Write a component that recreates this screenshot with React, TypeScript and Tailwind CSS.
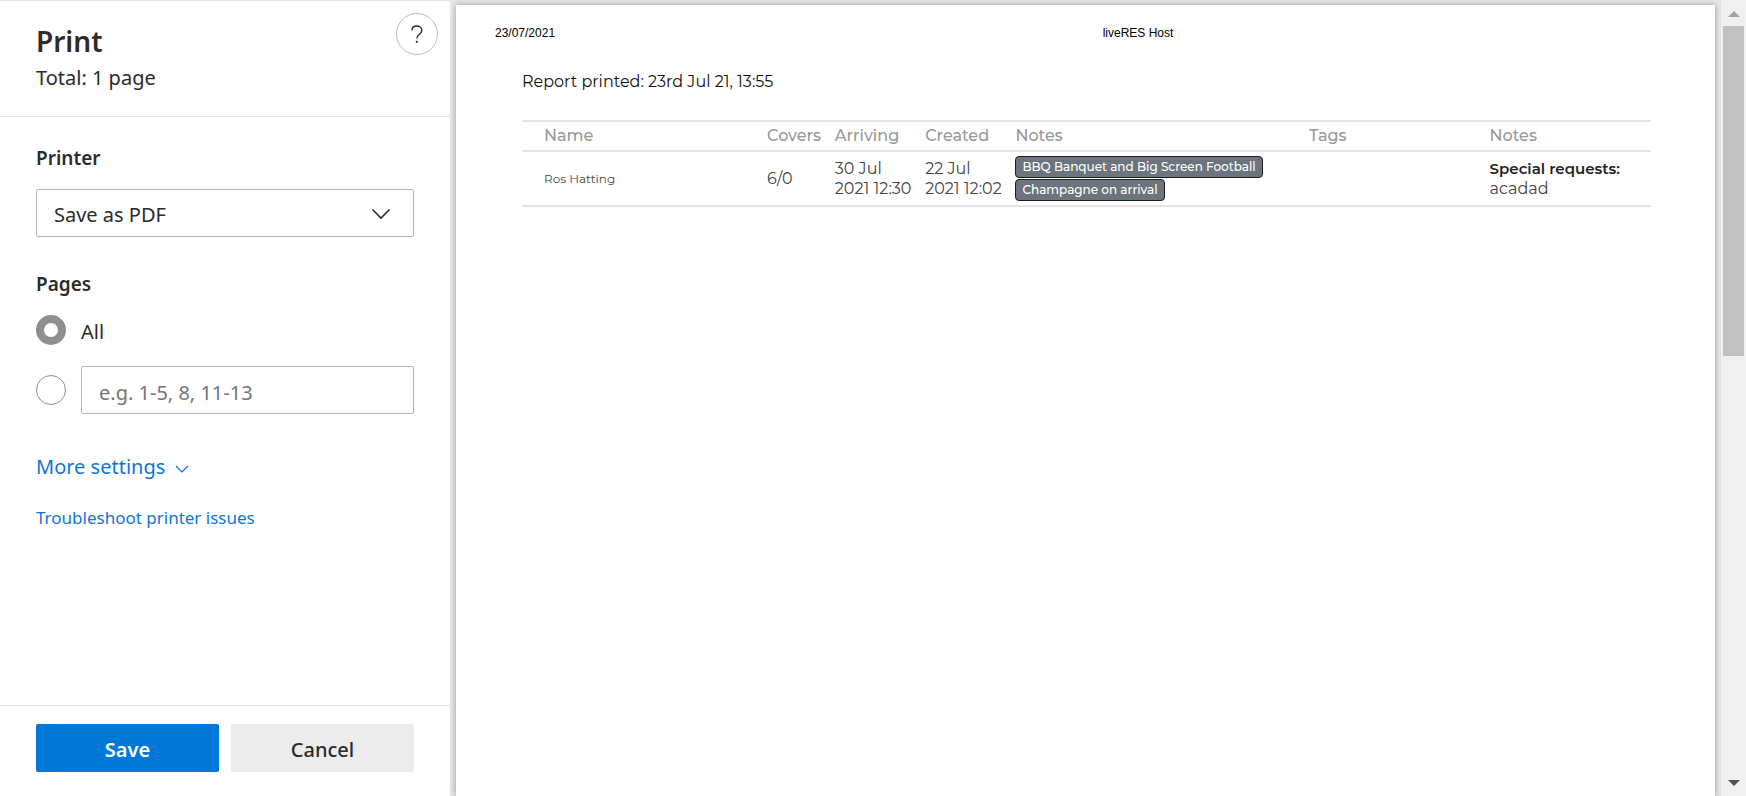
import { useState } from "react";

interface Booking {
  name: string;
  covers: string;
  arriving: string;
  created: string;
  notes: string[];
  tags: string;
  requests: string;
}

const bookings: Booking[] = [
  {
    name: "Ros Hatting",
    covers: "6/0",
    arriving: "30 Jul 2021 12:30",
    created: "22 Jul 2021 12:02",
    notes: ["BBQ Banquet and Big Screen Football", "Champagne on arrival"],
    tags: "",
    requests: "acadad",
  },
];

const columns = [
  { label: "Name", className: "w-[21%] pl-[22px]" },
  { label: "Covers", className: "w-[6%] pl-2" },
  { label: "Arriving", className: "w-[8%] pl-2" },
  { label: "Created", className: "w-[8%] pl-2" },
  { label: "Notes", className: "w-[26%] pl-2" },
  { label: "Tags", className: "w-[16%] pl-2" },
  { label: "Notes", className: "w-[15%] pl-2" },
];

const radioClass =
  "size-[30px] shrink-0 appearance-none rounded-full border border-[#8f8f8f] bg-white checked:border-8";

function PrintSettings() {
  const [range, setRange] = useState("all");
  const [pages, setPages] = useState("");

  return (
    <aside className="flex w-[450px] shrink-0 flex-col border-t border-[#e5e5e5] bg-white font-['Noto_Sans',sans-serif] text-xl text-[#2b2b2b]">
      <header className="flex justify-between border-b border-[#e5e5e5] pr-3 pb-6 pl-9">
        <div className="pt-5">
          <h1 className="text-[28px] leading-10 font-semibold">Print</h1>
          <p className="mt-[3px] leading-7">Total: 1 page</p>
        </div>
        <button
          type="button"
          aria-label="Help"
          className="mt-3 flex size-[42px] items-center justify-center rounded-full border border-[#bdbdbd]"
        >
          <svg width="12" height="18" viewBox="0 0 12 18" fill="none">
            <path
              d="M1 5.500C1 2.700 3 1 5.800 1s5 1.800 5 4.300c0 2.200-1.300 3.300-2.700 4.400C6.700 10.800 5.800 11.600 5.800 13.500"
              stroke="#2b2b2b"
              strokeWidth="1.400"
            />
            <circle cx="5.800" cy="16.800" r="1.100" fill="#2b2b2b" />
          </svg>
        </button>
      </header>

      <form
        id="print-form"
        className="flex-1 px-9 pt-[27px]"
        onSubmit={(e) => e.preventDefault()}
      >
        <label htmlFor="printer" className="block text-[19px] leading-7 font-semibold">
          Printer
        </label>
        <div className="relative mt-[17px]">
          <select
            id="printer"
            className="h-12 w-full appearance-none rounded-xs border border-[#b5b5b5] bg-white px-[17px] pt-1"
          >
            <option>Save as PDF</option>
          </select>
          <svg
            width="20"
            height="12"
            viewBox="0 0 20 12"
            fill="none"
            className="pointer-events-none absolute top-[19px] right-[23px]"
          >
            <path d="M1.500 1.500l8.500 8.500 8.500-8.500" stroke="#2b2b2b" strokeWidth="1.600" />
          </svg>
        </div>

        <fieldset className="mt-[33px]">
          <legend className="text-[19px] leading-7 font-semibold">Pages</legend>
          <div className="mt-[17px] flex h-[30px] items-center gap-[15px]">
            <input
              type="radio"
              id="range-all"
              name="range"
              checked={range === "all"}
              onChange={() => setRange("all")}
              className={radioClass}
            />
            <label htmlFor="range-all" className="pt-1">
              All
            </label>
          </div>
          <div className="mt-[21px] flex items-center gap-[15px]">
            <input
              type="radio"
              name="range"
              aria-label="Custom page range"
              checked={range === "custom"}
              onChange={() => setRange("custom")}
              className={radioClass}
            />
            <input
              type="text"
              aria-label="Page range"
              placeholder="e.g. 1-5, 8, 11-13"
              value={pages}
              onChange={(e) => setPages(e.target.value)}
              className="h-12 w-full min-w-0 rounded-xs border border-[#b5b5b5] px-[17px] pt-1 placeholder:text-[#757575]"
            />
          </div>
        </fieldset>

        <button
          type="button"
          className="mt-[39px] flex items-center gap-[10px] leading-7 text-[#0f75d4]"
        >
          More settings
          <svg width="14" height="8" viewBox="0 0 14 8" fill="none" className="mt-1">
            <path d="M1 1l6 6 6-6" stroke="currentColor" strokeWidth="1.200" />
          </svg>
        </button>
        <a href="#troubleshoot" className="mt-[25px] block text-[17px] leading-6 text-[#0f75d4]">
          Troubleshoot printer issues
        </a>
      </form>

      <footer className="flex gap-3 border-t border-[#e5e5e5] px-9 pt-[18px] pb-6">
        <button
          type="submit"
          form="print-form"
          className="h-12 flex-1 rounded-xs bg-[#0078d7] pt-[3px] font-semibold text-white"
        >
          Save
        </button>
        <button
          type="button"
          className="h-12 flex-1 rounded-xs bg-[#ececec] pt-[3px] font-medium"
        >
          Cancel
        </button>
      </footer>
    </aside>
  );
}

function BookingTable() {
  return (
    <table className="mt-7 w-full table-fixed border-collapse text-left text-[#444]">
      <thead>
        <tr className="border-y-2 border-[#e4e4e4]">
          {columns.map((col, i) => (
            <th
              key={i}
              scope="col"
              className={`h-[30px] font-medium text-[#999] ${col.className}`}
            >
              {col.label}
            </th>
          ))}
        </tr>
      </thead>
      <tbody>
        {bookings.map((b) => (
          <tr key={b.name} className="h-[55px] border-b-2 border-[#e4e4e4]">
            <td className="pl-[22px] text-xs">{b.name}</td>
            <td className="pl-2">{b.covers}</td>
            <td className="pl-2">{b.arriving}</td>
            <td className="pl-2">{b.created}</td>
            <td className="pl-2">
              <div className="flex flex-col items-start gap-px">
                {b.notes.map((note) => (
                  <span
                    key={note}
                    className="rounded-sm border border-[#1c1f22] bg-[#6c757d] px-[6px] text-xs leading-5 font-medium whitespace-nowrap text-white"
                  >
                    {note}
                  </span>
                ))}
              </div>
            </td>
            <td className="pl-2">{b.tags}</td>
            <td className="pl-2">
              <strong className="block text-[15px] leading-5 font-semibold whitespace-nowrap text-[#222]">
                Special requests:
              </strong>
              {b.requests}
            </td>
          </tr>
        ))}
      </tbody>
    </table>
  );
}

function Preview() {
  return (
    <main className="min-w-0 flex-1 overflow-hidden bg-[#e6e6e6] px-[6px] pt-[5px]">
      <article className="h-full bg-white shadow-[0_0_6px_#999]">
        <div className="flex pt-5 pl-[39px] font-['Liberation_Sans',Arial,sans-serif] text-xs text-black">
          <span className="w-[66px]">23/07/2021</span>
          <span className="flex-1 text-center">liveRES Host</span>
        </div>
        <div className="pt-[31px] pr-16 pl-[66px] font-['Montserrat',Inter,sans-serif] text-base leading-5">
          <p className="text-[#111]">Report printed: 23rd Jul 21, 13:55</p>
          <BookingTable />
        </div>
      </article>
    </main>
  );
}

function ScrollTrack() {
  return (
    <div
      aria-hidden="true"
      className="flex w-[25px] shrink-0 flex-col items-center bg-[#f0f0f0] pt-[11px] pb-[10px]"
    >
      <svg width="12" height="6" viewBox="0 0 12 6">
        <path d="M0 6l6-6 6 6z" fill="#a3a3a3" />
      </svg>
      <div className="mt-[9px] mb-auto h-[330px] w-[21px] bg-[#c1c1c1]" />
      <svg width="12" height="6" viewBox="0 0 12 6">
        <path d="M0 0l6 6 6-6z" fill="#505050" />
      </svg>
    </div>
  );
}

export default function App() {
  return (
    <div className="flex h-screen overflow-hidden">
      <PrintSettings />
      <Preview />
      <ScrollTrack />
    </div>
  );
}
